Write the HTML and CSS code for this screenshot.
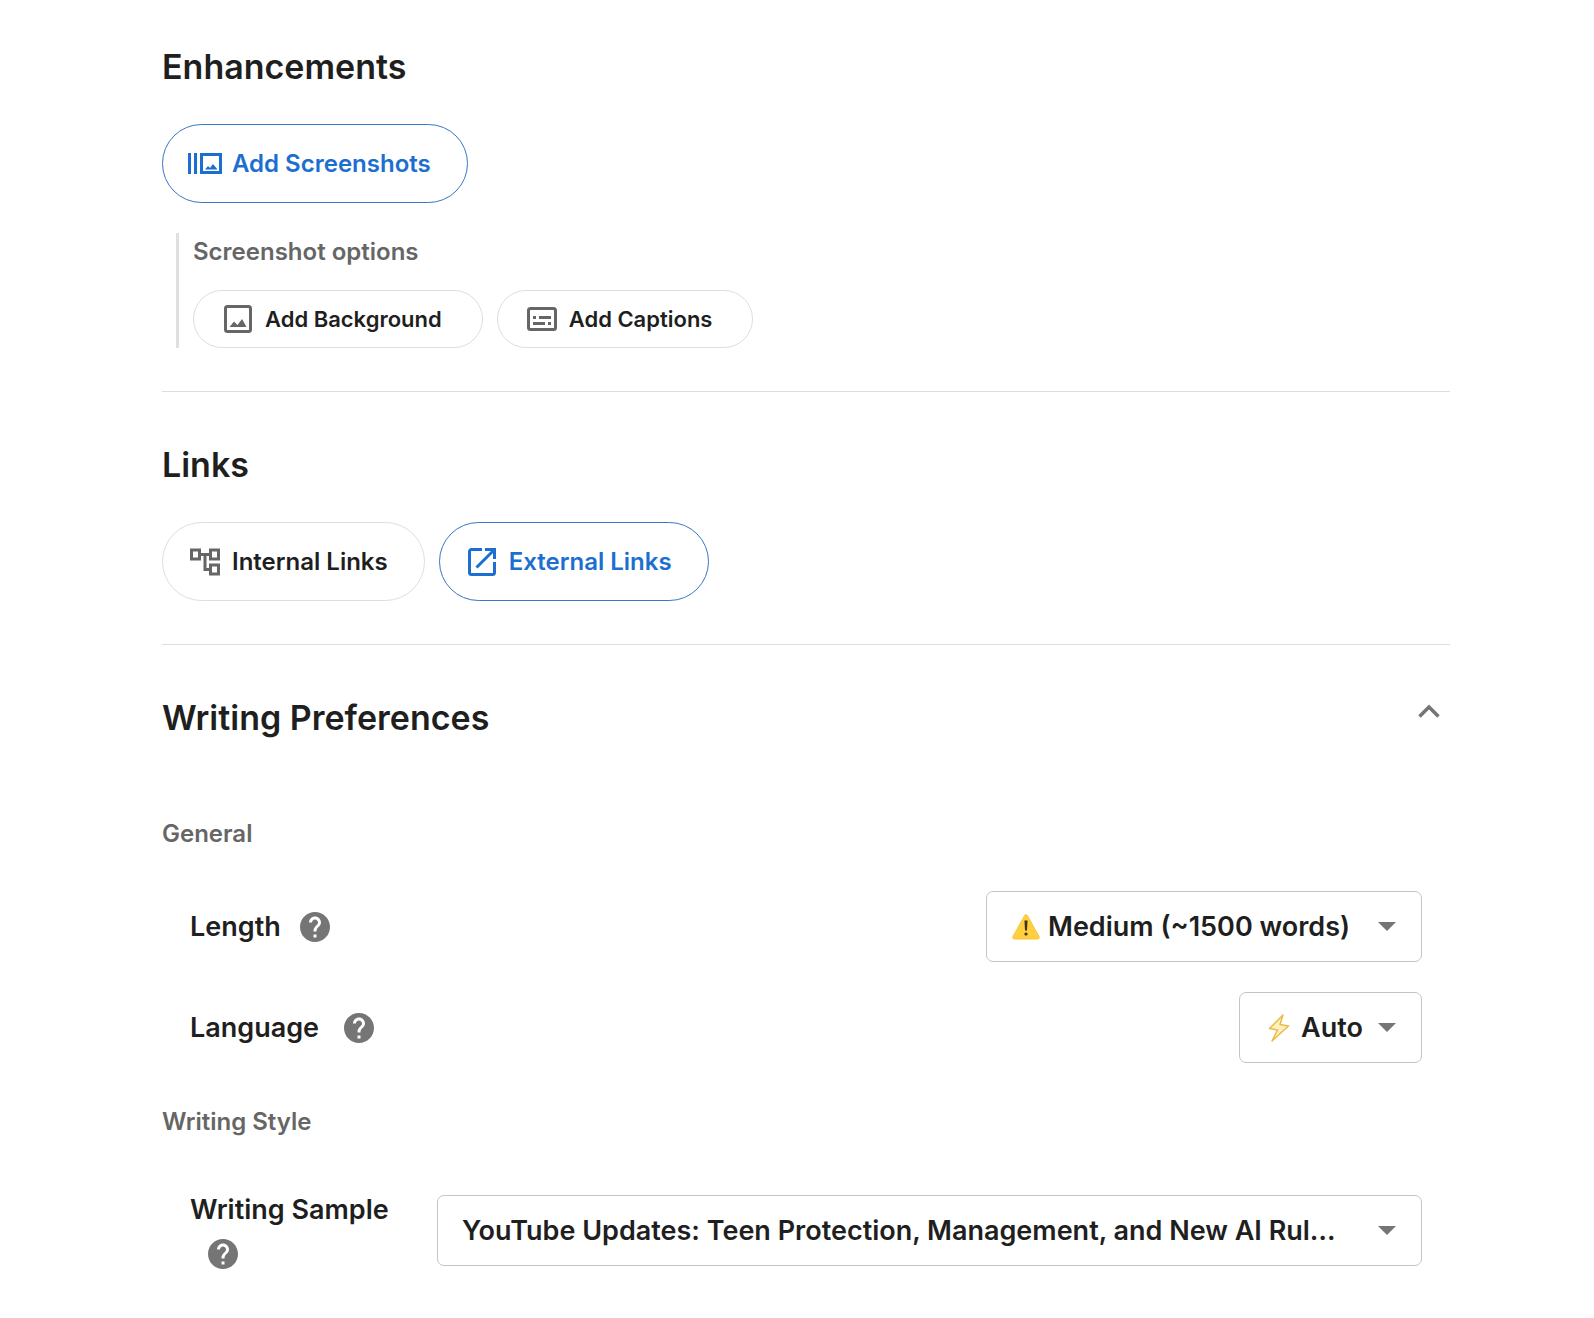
FILE: index.html
```html
<!DOCTYPE html>
<html lang="en">
<head>
<meta charset="utf-8">
<meta name="viewport" content="width=device-width, initial-scale=1">
<title>Article settings</title>
<link rel="stylesheet" href="styles.css">
</head>
<body>
<main class="page">
  <section class="section">
    <h2 class="title">Enhancements</h2>
    <div class="chips">
      <button type="button" class="chip chip-active">
        <svg class="icon icon-wide" viewBox="0 0 34 21" aria-hidden="true"><path fill="currentColor" fill-rule="evenodd" d="M0 0h3v21H0zM6 0h3v21H6zM12 0h22v21H12zM15 3v15h16V3zM17 16.500l3-3.500 2 2 3-4 4.500 5.500z"/></svg>
        <span>Add Screenshots</span>
      </button>
    </div>
    <div class="options">
      <h3 class="subtitle">Screenshot options</h3>
      <div class="chips">
        <button type="button" class="chip chip-small">
          <svg class="icon" viewBox="0 0 28 28" aria-hidden="true"><rect x="1.5" y="1.5" width="25" height="25" rx="2" fill="none" stroke="currentColor" stroke-width="3"/><path fill="currentColor" d="M5.500 22l4.500-5.500 3.500 3.500 4.500-6 4.500 8z"/></svg>
          <span>Add Background</span>
        </button>
        <button type="button" class="chip chip-small">
          <svg class="icon icon-caption" viewBox="0 0 30 24" aria-hidden="true"><rect x="1.5" y="1.5" width="27" height="21" rx="2" fill="none" stroke="currentColor" stroke-width="3"/><path fill="currentColor" d="M6 9h3v3H6zM12 9h12v3H12zM6 15h12v3H6zM21 15h3v3h-3z"/></svg>
          <span>Add Captions</span>
        </button>
      </div>
    </div>
  </section>

  <section class="section">
    <h2 class="title">Links</h2>
    <div class="chips">
      <button type="button" class="chip">
        <svg class="icon" viewBox="0 0 30 28" aria-hidden="true"><path fill="none" stroke="currentColor" stroke-width="3" d="M1.500 2h8v9h-8zM20.500 2h8v9h-8zM20.500 17h8v9h-8zM10 6.500h10M15 6.500v15h5"/></svg>
        <span>Internal Links</span>
      </button>
      <button type="button" class="chip chip-active">
        <svg class="icon" viewBox="0 0 28 28" aria-hidden="true"><path fill="none" stroke="currentColor" stroke-width="3" d="M14 1.500H3.500a2 2 0 0 0-2 2v21a2 2 0 0 0 2 2h21a2 2 0 0 0 2-2V14M17 1.500h9.500V11M26.500 1.500L8.500 19.500"/></svg>
        <span>External Links</span>
      </button>
    </div>
  </section>

  <section class="section">
    <header class="section-head">
      <h2 class="title">Writing Preferences</h2>
      <button type="button" class="collapse" aria-label="Collapse" aria-expanded="true">
        <svg width="22" height="14" viewBox="0 0 22 14" aria-hidden="true"><path fill="none" stroke="currentColor" stroke-width="3.500" d="M1.500 12.500L11 3l9.500 9.500"/></svg>
      </button>
    </header>

    <h3 class="subtitle">General</h3>
    <div class="rows">
      <div class="row">
        <div class="name">
          <label for="length">Length</label>
          <button type="button" class="help" aria-label="About length"><svg viewBox="2 2 20 20" aria-hidden="true"><path fill="currentColor" d="M12 2C6.480 2 2 6.480 2 12s4.480 10 10 10 10-4.480 10-10S17.520 2 12 2zm1 17h-2v-2h2v2zm2.070-7.750l-.9.920C13.450 12.900 13 13.500 13 15h-2v-.5c0-1.100.45-2.100 1.170-2.830l1.240-1.260c.37-.36.59-.86.59-1.410 0-1.100-.9-2-2-2s-2 .9-2 2H8c0-2.210 1.790-4 4-4s4 1.790 4 4c0 .88-.36 1.680-.93 2.250z"/></svg></button>
        </div>
        <div class="select select-length">
          <svg class="emoji" viewBox="0 0 28 26" aria-hidden="true"><path fill="#ffcf3f" stroke="#fdc53a" d="M12.600 1.500q1.400-2 2.800 0L27 22.500q1 2.500-1.500 2.500h-23Q0 25 1 22.500z"/><path fill="#3e3212" d="M12.500 6.500h3l-.5 10h-2z"/><circle cx="14" cy="20" r="1.600" fill="#3e3212"/></svg>
          <select id="length"><option>Medium (~1500 words)</option></select>
          <svg class="arrow" viewBox="0 0 18 9" aria-hidden="true"><path fill="currentColor" d="M0 0h18L9 9z"/></svg>
        </div>
      </div>
      <div class="row">
        <div class="name name-loose">
          <label for="language">Language</label>
          <button type="button" class="help" aria-label="About language"><svg viewBox="2 2 20 20" aria-hidden="true"><path fill="currentColor" d="M12 2C6.480 2 2 6.480 2 12s4.480 10 10 10 10-4.480 10-10S17.520 2 12 2zm1 17h-2v-2h2v2zm2.070-7.750l-.9.920C13.450 12.900 13 13.500 13 15h-2v-.5c0-1.100.45-2.100 1.170-2.830l1.240-1.260c.37-.36.59-.86.59-1.410 0-1.100-.9-2-2-2s-2 .9-2 2H8c0-2.210 1.790-4 4-4s4 1.790 4 4c0 .88-.36 1.680-.93 2.250z"/></svg></button>
        </div>
        <div class="select select-language">
          <svg class="emoji" viewBox="0 0 28 28" aria-hidden="true"><path fill="#fff0bd" stroke="#efb84c" stroke-width="1.500" stroke-linejoin="round" d="M18 1L4.500 14.500l8 1.500L7 27l16.500-15-8.500-1.500z"/></svg>
          <select id="language"><option>Auto</option></select>
          <svg class="arrow" viewBox="0 0 18 9" aria-hidden="true"><path fill="currentColor" d="M0 0h18L9 9z"/></svg>
        </div>
      </div>
    </div>

    <h3 class="subtitle">Writing Style</h3>
    <div class="rows rows-style">
      <div class="row">
        <div class="name name-stacked">
          <label for="sample">Writing Sample</label>
          <button type="button" class="help" aria-label="About writing sample"><svg viewBox="2 2 20 20" aria-hidden="true"><path fill="currentColor" d="M12 2C6.480 2 2 6.480 2 12s4.480 10 10 10 10-4.480 10-10S17.520 2 12 2zm1 17h-2v-2h2v2zm2.070-7.750l-.9.920C13.450 12.900 13 13.500 13 15h-2v-.5c0-1.100.45-2.100 1.170-2.830l1.240-1.260c.37-.36.59-.86.59-1.410 0-1.100-.9-2-2-2s-2 .9-2 2H8c0-2.210 1.790-4 4-4s4 1.790 4 4c0 .88-.36 1.680-.93 2.250z"/></svg></button>
        </div>
        <div class="select select-sample">
          <select id="sample"><option>YouTube Updates: Teen Protection, Management, and New AI Rul…</option></select>
          <svg class="arrow" viewBox="0 0 18 9" aria-hidden="true"><path fill="currentColor" d="M0 0h18L9 9z"/></svg>
        </div>
      </div>
    </div>
  </section>
</main>
</body>
</html>
```

FILE: styles.css
```css
* {
  box-sizing: border-box;
}

body {
  margin: 0;
  background: #fff;
  color: #1f1f1f;
  font-family: Inter, "Liberation Sans", sans-serif;
  font-weight: 600;
}

button,
select {
  font: inherit;
  color: inherit;
}

svg {
  display: block;
  flex: none;
}

.page {
  padding: 0 144px 0 162px;
}

.section {
  padding: 45px 0 43px;
}

.section + .section {
  padding-top: 51px;
  border-top: 1px solid #dedede;
}

.section:last-child {
  padding-bottom: 0;
}

.title {
  margin: 0;
  font-size: 34px;
  line-height: 44px;
  font-weight: 600;
}

.subtitle {
  margin: 0;
  color: #666;
  font-size: 24px;
  line-height: 38px;
  font-weight: 600;
}

.chips {
  display: flex;
  gap: 14px;
}

.title + .chips {
  margin-top: 35px;
}

.chip {
  display: flex;
  align-items: center;
  gap: 9px;
  height: 79px;
  padding: 0 36px 0 24px;
  border: 1px solid #dedede;
  border-radius: 40px;
  background: #fff;
  font-size: 24px;
  line-height: 32px;
  white-space: nowrap;
}

.chip .icon {
  color: #666;
}

.chip-active,
.chip-active .icon {
  color: #1c6fd1;
}

.chip-active {
  border-color: #3577c4;
}

.chip-small {
  height: 58px;
  padding: 0 40px 0 26px;
  font-size: 22px;
}

.icon {
  width: 36px;
  height: 28px;
}

.icon-wide {
  height: 21px;
}

.icon-caption {
  height: 24px;
}

.options {
  margin: 30px 0 0 14px;
  padding-left: 14px;
  border-left: 3px solid #e0e0e0;
}

.options .chips {
  margin-top: 19px;
}

.section-head {
  display: flex;
  align-items: flex-start;
  justify-content: space-between;
  margin-bottom: 75px;
}

.collapse {
  height: 30px;
  padding: 0 10px;
  border: 0;
  background: none;
  color: #757575;
}

.rows {
  display: flex;
  flex-direction: column;
  gap: 30px;
  margin: 38px 28px 40px;
}

.rows-style {
  margin-top: 51px;
}

.row,
.name {
  display: flex;
  align-items: center;
}

.row {
  justify-content: space-between;
}

.name {
  gap: 19px;
  line-height: 36px;
}

.name,
.select select {
  font-size: 27px;
}

.name-loose {
  gap: 25px;
}

.name-stacked {
  flex-direction: column;
  align-items: flex-start;
  gap: 11px;
  width: 247px;
}

.name-stacked .help {
  margin-left: 18px;
}

.help {
  width: 30px;
  height: 30px;
  padding: 0;
  border: 0;
  background: none;
  color: #757575;
}

.select {
  display: flex;
  align-items: center;
  position: relative;
  height: 71px;
  border: 1px solid #c4c4c4;
  border-radius: 7px;
}

.select select {
  width: 100%;
  height: 100%;
  padding: 0 48px 0 61px;
  border: 0;
  background: none;
  appearance: none;
}

.select .emoji {
  position: absolute;
  left: 25px;
  width: 28px;
  height: 28px;
}

.select .arrow {
  position: absolute;
  right: 25px;
  width: 18px;
  height: 9px;
  color: #757575;
  pointer-events: none;
}

.select-length {
  width: 436px;
}

.select-language {
  width: 183px;
}

.select-sample {
  flex: 1;
}

.select-sample select {
  padding-left: 24px;
}
```
